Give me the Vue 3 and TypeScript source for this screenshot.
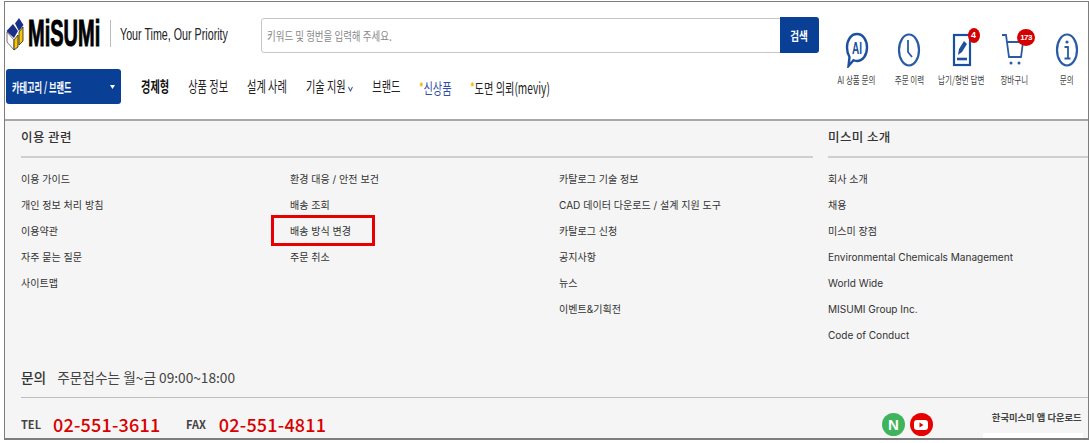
<script setup lang="ts">
const navItems = [
  { label: '경제형', cls: 'strong' },
  { label: '상품 정보', cls: '' },
  { label: '설계 사례', cls: '' },
]
const columns: string[][] = [
  ['이용 가이드', '개인 정보 처리 방침', '이용약관', '자주 묻는 질문', '사이트맵'],
  ['환경 대응 / 안전 보건', '배송 조회', '배송 방식 변경', '주문 취소'],
  ['카탈로그 기술 정보', 'CAD 데이터 다운로드 / 설계 지원 도구', '카탈로그 신청', '공지사항', '뉴스', '이벤트&기획전'],
]
const about = ['회사 소개', '채용', '미스미 장점', 'Environmental Chemicals Management', 'World Wide', 'MISUMI Group Inc.', 'Code of Conduct']
</script>

<template>
  <div class="frame">
    <header class="header">
      <div class="main">
        <div class="top">
          <svg class="logo-mark" width="18" height="34" viewBox="0 0 18 34">
            <path d="M1 15 L8 23 L8 33 L1 25 Z" fill="#fff" stroke="#555" stroke-width="0.8" />
            <path d="M8 23 L12 18 L12 30 L8 33 Z" fill="#f7c600" stroke="#222" stroke-width="0.8" />
            <path d="M13 15 L17 10 L17 24 L13 28 Z" fill="#f7c600" stroke="#222" stroke-width="0.8" />
            <path d="M0.5 14 L7 7 L12 14 L8 21 Z" fill="#1b2f86" />
            <path d="M9 6.5 L13 1 L17.5 8 L13 14 Z" fill="#1b2f86" />
          </svg>
          <div class="wordmark"><span>MiSUMi</span></div>
          <div class="sep"></div>
          <div class="tagline"><span>Your Time, Our Priority</span></div>
          <div class="search">
            <div class="placeholder"><span>키워드 및 형번을 입력해 주세요.</span></div>
            <div class="search-btn"><span>검색</span></div>
          </div>
        </div>
        <div class="bottom">
          <div class="cat-btn">
            <span class="cat-label">카테고리 / 브랜드</span>
            <svg width="5" height="4" viewBox="0 0 5 4"><path d="M0 0 H5 L2.5 4 Z" fill="#fff" /></svg>
          </div>
          <nav class="nav">
            <span v-for="n in navItems" :key="n.label" :class="n.cls">{{ n.label }}</span>
            <span class="has-caret">기술 지원<svg width="8" height="6" viewBox="0 0 8 6"><path d="M1 1 L4 5 L7 1" fill="none" stroke="#3557a5" stroke-width="1.3" /></svg></span>
            <span>브랜드</span>
            <span class="new"><i>*</i>신상품</span>
            <span><i>*</i>도면 의뢰(meviy)</span>
          </nav>
        </div>
      </div>
      <div class="tools">
        <div class="tool">
          <svg width="24" height="36" viewBox="0 0 24 36">
            <path d="M12 2 C18 2 22 8 22 15.5 C22 23 18 29 12 29 C10.5 29 9.5 28.8 8.5 28.3 L3.5 34 L4.5 25 C3 22.5 2 19.5 2 15.5 C2 8 6 2 12 2 Z" fill="none" stroke="#1d4f9f" stroke-width="2.4" />
            <text transform="translate(12 21.5) scale(0.72 1.15)" text-anchor="middle" class="ai">AI</text>
          </svg>
          <span>AI 상품 문의</span>
        </div>
        <div class="tool">
          <svg width="24" height="36" viewBox="0 0 24 36">
            <ellipse cx="12" cy="18" rx="10" ry="15.5" fill="none" stroke="#2a5ca6" stroke-width="2.2" />
            <path d="M11 8 V20 L15 25" fill="none" stroke="#2a5ca6" stroke-width="1.8" />
          </svg>
          <span>주문 이력</span>
        </div>
        <div class="tool">
          <svg width="24" height="36" viewBox="0 0 24 36">
            <rect x="4" y="3" width="16" height="30" fill="none" stroke="#1d4f9f" stroke-width="2.2" />
            <path d="M8 23 L9 17 L14 9 L17 12 L12 20 Z" fill="#1d4f9f" />
            <path d="M7 27 H17" stroke="#1d4f9f" stroke-width="2.6" />
          </svg>
          <span>납기/형번 답변</span>
          <b class="badge small">4</b>
        </div>
        <div class="tool">
          <svg class="cart" width="24" height="36" viewBox="0 0 24 36">
            <path d="M1 3 H5 L8 25 H20 L22 10 H6" fill="none" stroke="#2a5ca6" stroke-width="1.8" />
            <circle cx="10" cy="31" r="1.5" fill="#2a5ca6" />
            <circle cx="18" cy="31" r="1.5" fill="#2a5ca6" />
          </svg>
          <span>장바구니</span>
          <b class="badge wide">173</b>
        </div>
        <div class="tool">
          <svg width="24" height="36" viewBox="0 0 24 36">
            <ellipse cx="12" cy="18" rx="10" ry="15.5" fill="none" stroke="#2a5ca6" stroke-width="2.2" />
            <circle cx="12" cy="10" r="1.6" fill="#2a5ca6" />
            <path d="M9.5 15 H13 V26 M9.5 26.5 H15.5" fill="none" stroke="#2a5ca6" stroke-width="1.8" />
          </svg>
          <span>문의</span>
        </div>
      </div>
    </header>

    <section class="links">
      <div class="group wide-group">
        <h3>이용 관련</h3>
        <div class="cols">
          <ul v-for="(col, i) in columns" :key="i">
            <li v-for="item in col" :key="item" :class="{ marked: item === '배송 방식 변경' }">{{ item }}</li>
          </ul>
        </div>
      </div>
      <div class="group about">
        <h3>미스미 소개</h3>
        <ul>
          <li v-for="item in about" :key="item">{{ item }}</li>
        </ul>
      </div>
    </section>

    <section class="contact">
      <div class="hours"><strong>문의</strong><span>주문접수는 월~금 09:00~18:00</span></div>
      <div class="phones">
        <small>TEL</small><b class="num">02-551-3611</b>
        <small class="fax">FAX</small><b class="num num2">02-551-4811</b>
        <div class="social">
          <span class="round naver">N</span>
          <span class="round yt">
            <svg width="14" height="10" viewBox="0 0 14 10"><rect width="14" height="10" rx="3" fill="#fff" /><path d="M5.5 2.5 L9.5 5 L5.5 7.5 Z" fill="#e60000" /></svg>
          </span>
        </div>
        <div class="app">
          <span>한국미스미 앱 다운로드</span>
          <div class="patch"></div>
        </div>
      </div>
    </section>
  </div>
</template>

<style>
html, body { background: #fff; }
</style>

<style scoped>
* { box-sizing: border-box; }
.frame {
  margin: 1px 0 0 4px;
  width: 1085px;
  height: 439px;
  border: 1px solid #7d7d7d;
  border-bottom-width: 2px;
  background: #f5f5f5;
  overflow: hidden;
  color: #333;
  font-family: Inter, "Noto Sans CJK KR", sans-serif;
}
.header {
  display: flex;
  height: 119px;
  background: #fff;
  border-bottom: 2px solid #a8a8a8;
}
.main { width: 829px; flex: none; }
.top { display: flex; align-items: center; height: 50px; margin-top: 8px; padding-left: 1px; }
.logo-mark { flex: none; margin-top: -3px; }
.wordmark { width: 82px; margin-left: 4px; height: 36px; line-height: 36px; margin-top: -3px; }
.wordmark span {
  display: inline-block;
  font: 900 36px/36px "Liberation Sans", sans-serif;
  -webkit-text-stroke: 1px #000;
  color: #000;
  transform: scaleX(0.556);
  transform-origin: left center;
}
.sep { width: 1px; height: 27px; background: #bbb; margin-right: 9px; margin-top: -3px; }
.tagline { width: 141px; margin-top: -2px; }
.tagline span {
  display: inline-block;
  font: 400 17px/20px "Liberation Sans", sans-serif;
  color: #222;
  white-space: nowrap;
  transform: scaleX(0.63);
  transform-origin: left center;
}
.search {
  width: 557px;
  height: 35px;
  display: flex;
  border: 1.5px solid #c6c6c6;
  border-radius: 3px;
  background: #fff;
  flex: none;
}
.placeholder { flex: 1; padding-left: 5px; line-height: 32px; overflow: hidden; }
.placeholder span {
  display: inline-block;
  font: 400 12px/32px "Noto Sans CJK KR", sans-serif;
  color: #888;
  white-space: nowrap;
  transform: scaleX(0.79);
  transform-origin: left center;
}
.search-btn {
  width: 39px;
  margin: -1.5px -1.5px -1.5px 0;
  background: #0a3f96;
  color: #fff;
  display: flex;
  align-items: center;
  justify-content: center;
  border-radius: 0 3px 3px 0;
}
.search-btn span { font: 700 12px "Noto Sans CJK KR", sans-serif; transform: scaleX(0.8); }
.bottom { display: flex; align-items: center; margin-top: 9px; padding-left: 1px; }
.cat-btn {
  width: 115px;
  height: 35px;
  flex: none;
  background: #0a3f96;
  border-radius: 3px;
  color: #fff;
  display: flex;
  align-items: center;
  justify-content: space-between;
  padding: 0 6px;
}
.cat-label {
  font: 700 13px "Noto Sans CJK KR", sans-serif;
  white-space: nowrap;
  width: 70px;
  transform: scaleX(0.63);
  transform-origin: left center;
}
.nav {
  display: flex;
  gap: 28px;
  margin-left: 20px;
  font: 400 15px/20px "Noto Sans CJK KR", sans-serif;
  color: #222;
  white-space: nowrap;
  transform: scaleX(0.68);
  transform-origin: left center;
}
.nav .strong { font-weight: 700; color: #111; }
.nav .new { color: #2f4da8; }
.nav i { color: #f5b800; font-style: normal; font-weight: 900; font-size: 11px; vertical-align: 3px; }
.has-caret svg { margin-left: 3px; }
.tools { display: flex; gap: 12.5px; padding: 30px 0 0 2.5px; }
.tool {
  position: relative;
  width: 40px;
  display: flex;
  flex-direction: column;
  align-items: center;
  flex: none;
}
.tool svg { flex: none; }
.tool .cart { margin-left: -3px; }
.tool > span {
  margin-top: 5px;
  font: 400 10.5px/14px "Noto Sans CJK KR", sans-serif;
  color: #444;
  white-space: nowrap;
  transform: scaleX(0.72);
}
.ai { font: 700 14px "Liberation Sans", sans-serif; fill: #1d4f9f; }
.badge {
  position: absolute;
  background: #d40000;
  color: #fff;
  border-radius: 50%;
  display: flex;
  align-items: center;
  justify-content: center;
  font: 700 9px/1 "Liberation Sans", sans-serif;
}
.badge.small { width: 12px; height: 15px; top: -4px; left: 26px; }
.badge.wide { width: 18px; height: 17px; top: -3px; left: 23px; font-size: 8px; letter-spacing: -0.6px; }

.links { display: flex; height: 235px; padding-left: 16px; }
.group h3 {
  margin: 0;
  height: 37px;
  font: 500 12.5px/31px "Noto Sans CJK KR", sans-serif;
  letter-spacing: 0.4px;
  color: #333;
  border-bottom: 2px solid #cfcfcf;
}
.wide-group { width: 792px; flex: none; }
.about { margin-left: 15px; width: 262px; flex: none; }
.cols { display: grid; grid-template-columns: 269px 269px 1fr; }
ul { list-style: none; margin: 0; padding: 8px 0 0; }
li {
  position: relative;
  height: 26px;
  line-height: 26px;
  font-size: 10.05px;
  white-space: nowrap;
  color: #333;
}
.marked::after {
  content: "";
  position: absolute;
  left: -19px;
  top: -3px;
  width: 104px;
  height: 31px;
  box-sizing: border-box;
  border: 3px solid #e60000;
}
.contact { padding: 0 0 0 16px; }
.hours {
  display: flex;
  gap: 11px;
  align-items: center;
  height: 42px;
  border-bottom: 1px solid #bdbdbd;
  font: 400 13.7px "Noto Sans CJK KR", sans-serif;
  color: #444;
}
.hours strong { font-weight: 500; color: #333; }
.phones { display: flex; align-items: center; height: 40px; padding-top: 12px; }
.phones small { font: 700 11px "Noto Sans CJK KR", sans-serif; color: #444; }
.num { margin-left: 12px; font: 500 18px/24px "Noto Sans CJK KR", sans-serif; color: #d90000; letter-spacing: 0.2px; width: 107px; white-space: nowrap; }
.num2 { margin-left: 13px; }
.fax { margin-left: 26px; }
.social { display: flex; gap: 5px; margin-left: 556px; margin-top: 1px; }
.round {
  width: 23px;
  height: 23px;
  border-radius: 50%;
  display: flex;
  align-items: center;
  justify-content: center;
  color: #fff;
}
.naver { background: #3fb45c; font: 900 15px "Liberation Sans", sans-serif; }
.yt { background: #e60000; }
.app { position: relative; margin-left: 59px; align-self: flex-start; }
.app span { display: block; font: 700 9.3px/14px "Noto Sans CJK KR", sans-serif; color: #444; white-space: nowrap; }
.patch { width: 100px; height: 7px; margin: 9px 0 0 -9px; background: #fff; }
</style>
